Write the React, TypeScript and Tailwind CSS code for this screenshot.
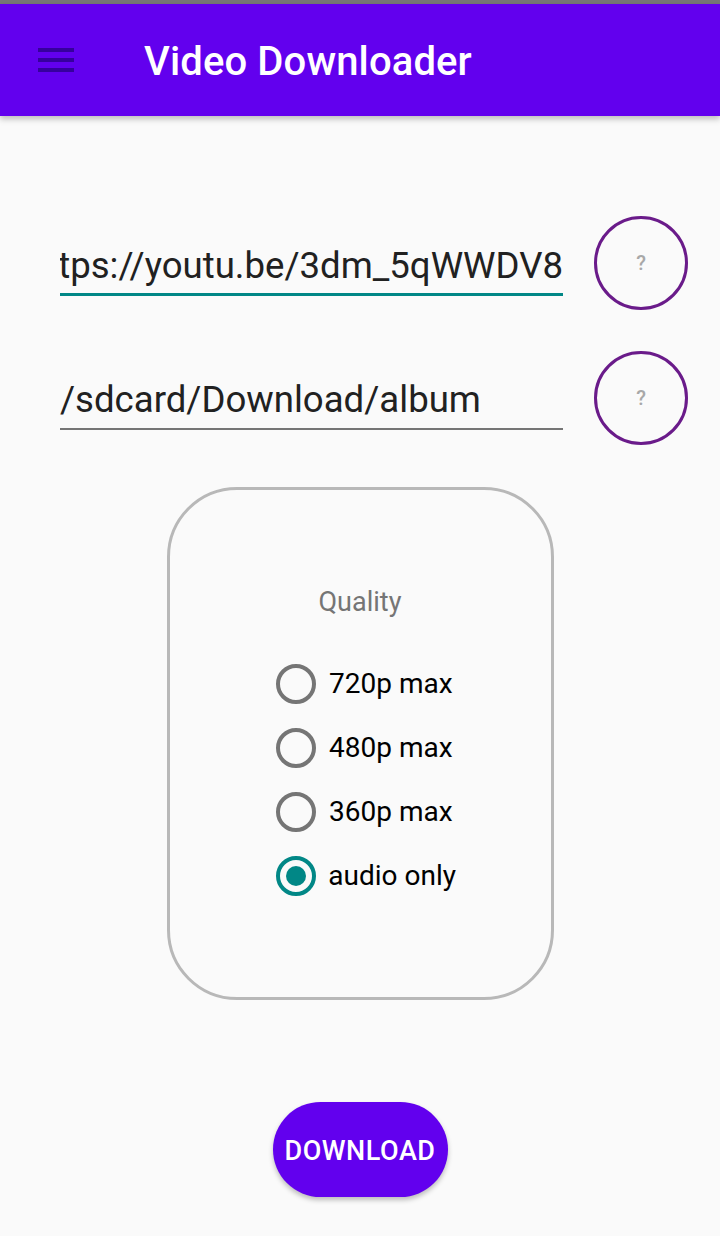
import React, { useState } from "react";

const qualities = ["720p max", "480p max", "360p max", "audio only"];

function HelpButton() {
  return (
    <button className="w-[94px] h-[94px] shrink-0 rounded-full border-[3px] border-[#6a1b8a] flex items-center justify-center text-[20px] font-medium text-[#a8a8a8] leading-none">
      ?
    </button>
  );
}

export default function App() {
  const [quality, setQuality] = useState("audio only");

  return (
    <div
      className="w-[720px] h-[1236px] bg-[#fafafa] flex flex-col overflow-hidden"
      style={{ fontFamily: "Roboto, 'Noto Sans', sans-serif" }}
    >
      <div className="h-[4px] bg-[#777777]" />

      <header className="h-[112px] bg-[#6200ee] flex items-center shadow-[0_3px_6px_rgba(0,0,0,0.25)] relative z-10">
        <div className="w-[144px] flex items-center pl-[32px]">
          <svg width="48" height="48" viewBox="0 0 24 24" className="fill-[#36009e]">
            <path d="M3 18h18v-2H3v2zm0-5h18v-2H3v2zm0-7v2h18V6H3z" />
          </svg>
        </div>
        <h1 className="text-white text-[40px] font-medium leading-none tracking-[0.003em] mt-[4px]">
          Video Downloader
        </h1>
      </header>

      <main className="flex flex-col items-center">
        <div className="w-full flex flex-col gap-[41px] mt-[100px] pl-[60px]">
          <div className="flex items-center">
            <div className="w-[503px] h-[94px] flex flex-col justify-end pb-[14px]">
              <div className="border-b-[3px] border-[#018786] pb-[6px] overflow-hidden flex justify-end">
                <div className="text-[36.6px] leading-[42px] text-[#212121] whitespace-nowrap shrink-0">
                  https://youtu.be/3dm_5qWWDV8
                </div>
              </div>
            </div>
            <div className="ml-[31px]">
              <HelpButton />
            </div>
          </div>

          <div className="flex items-center">
            <div className="w-[503px] h-[94px] flex flex-col justify-end pb-[15px]">
              <div className="border-b-[2px] border-[#757575] pb-[7px]">
                <div className="text-[36.6px] leading-[42px] text-[#212121] whitespace-nowrap">
                  /sdcard/Download/album
                </div>
              </div>
            </div>
            <div className="ml-[31px]">
              <HelpButton />
            </div>
          </div>
        </div>

        <section className="mt-[42px] w-[387px] h-[513px] border-[3px] border-[#b8b8b8] rounded-[70px] flex flex-col items-center justify-center pt-[8px]">
          <div className="text-[27px] leading-[28px] text-[#757575]">Quality</div>
          <div className="mt-[36px] w-[184px] ml-[8px] flex flex-col">
            {qualities.map((q) => {
              const checked = q === quality;
              return (
                <label
                  key={q}
                  onClick={() => setQuality(q)}
                  className="h-[64px] flex items-center cursor-pointer"
                >
                  <span className="w-[48px] h-[48px] flex items-center justify-center">
                    <span
                      className={
                        checked
                          ? "w-[40px] h-[40px] rounded-full border-[4px] border-[#018786] flex items-center justify-center"
                          : "w-[40px] h-[40px] rounded-full border-[4px] border-[#757575]"
                      }
                    >
                      {checked && <span className="w-[20px] h-[20px] rounded-full bg-[#018786]" />}
                    </span>
                  </span>
                  <span className="ml-[9px] text-[28px] leading-none text-black whitespace-nowrap">
                    {q}
                  </span>
                </label>
              );
            })}
          </div>
        </section>

        <button className="mt-[102px] w-[175px] h-[95px] rounded-full bg-[#6200ee] text-white text-[27px] font-medium leading-none tracking-[0.02em] shadow-[0_3px_5px_rgba(0,0,0,0.25)] pt-[3px]">
          DOWNLOAD
        </button>
      </main>
    </div>
  );
}
